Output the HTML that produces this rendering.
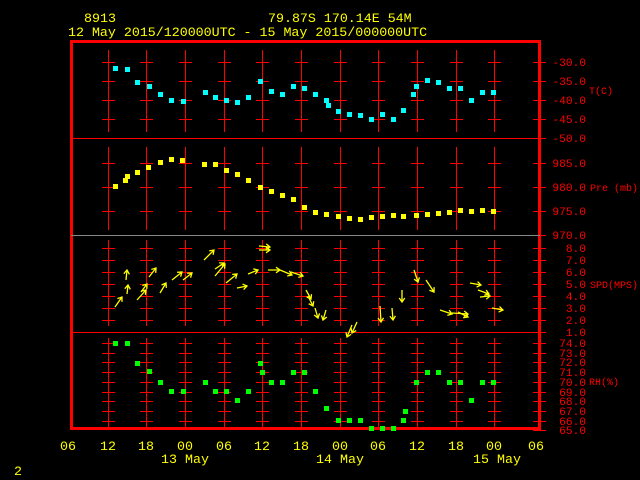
<!DOCTYPE html>
<html><head><meta charset="utf-8"><style>
html,body{margin:0;padding:0;background:#000;width:640px;height:480px;overflow:hidden}
svg{display:block}
text{font-family:"Liberation Mono",monospace;font-size:13.3px}
.s{font-size:11.2px}
.t{font-size:10px}
</style></head><body>
<svg id="s" width="640" height="480" viewBox="0 0 640 480" xmlns="http://www.w3.org/2000/svg">
<g fill="#ffff00">
<text x="84" y="22">8913</text>
<text x="268" y="22">79.87S  170.14E   54M</text>
<text x="68" y="36">12 May 2015/120000UTC - 15 May 2015/000000UTC</text>
<g text-anchor="middle">
<text x="68" y="450">06</text><text x="108" y="450">12</text><text x="146" y="450">18</text><text x="185" y="450">00</text>
<text x="224" y="450">06</text><text x="262" y="450">12</text><text x="301" y="450">18</text><text x="340" y="450">00</text>
<text x="378" y="450">06</text><text x="417" y="450">12</text><text x="456" y="450">18</text><text x="494" y="450">00</text><text x="536" y="450">06</text>
<text x="185" y="463">13 May</text><text x="340" y="463">14 May</text><text x="497" y="463">15 May</text>
</g>
<text x="14" y="475">2</text>
</g>
<g id="grid"></g>
<rect x="71.5" y="41.5" width="468" height="387" fill="none" stroke="#ff0000" stroke-width="3"/>
<line x1="71" y1="138.5" x2="540" y2="138.5" stroke="#ff0000" stroke-width="1"/>
<line x1="71" y1="235.5" x2="540" y2="235.5" stroke="#888" stroke-width="1"/>
<line x1="71" y1="332.5" x2="540" y2="332.5" stroke="#ff0000" stroke-width="1"/>
<g fill="#ff0000" text-anchor="end" id="lab"></g>
<g fill="#ff0000">
<text x="589" y="94" class="t">T(C)</text>
<text x="590" y="191" class="t">Pre (mb)</text>
<text x="590" y="288" class="t">SPD(MPS)</text>
<text x="589" y="385" class="t">RH(%)</text>
</g>
<g id="pts"></g>
<g id="arr" stroke="#ffff00" stroke-width="1.3" fill="none"></g>
</svg>
<script>
var NS="http://www.w3.org/2000/svg";
function el(p,t,a){var e=document.createElementNS(NS,t);for(var k in a)e.setAttribute(k,a[k]);p.appendChild(e);return e;}
var g=document.getElementById('grid'),lab=document.getElementById('lab');
var xs=[108,146,185,224,262,301,340,378,417,456,494];
var rows=[];
[62,81,100,119].forEach(function(y){rows.push(y)});
[163,187,211].forEach(function(y){rows.push(y)});
for(var i=0;i<8;i++)rows.push(248+i*12);
for(var i=0;i<9;i++)rows.push(Math.round(343+i*9.7));
xs.forEach(function(x){
 [[50,132],[147,230],[240,326],[338,428]].forEach(function(r){el(g,'line',{x1:x+0.5,y1:r[0],x2:x+0.5,y2:r[1],stroke:'#ff0000','stroke-width':1});});
 rows.forEach(function(y){el(g,'line',{x1:x-6,y1:y+0.5,x2:x+7,y2:y+0.5,stroke:'#ff0000','stroke-width':1});});
});
var L=[[62,"-30.0"],[81,"-35.0"],[100,"-40.0"],[119,"-45.0"],[138,"-50.0"],[163,"985.0"],[187,"980.0"],[211,"975.0"],[235,"970.0"]];
for(var i=0;i<8;i++)L.push([248+i*12,(8-i)+".0"]);
for(var i=0;i<10;i++)L.push([Math.round(343+i*9.7),(74-i)+".0"]);
L.forEach(function(a){el(g,'line',{x1:533,y1:a[0]+0.5,x2:546,y2:a[0]+0.5,stroke:'#ff0000','stroke-width':1});
 var t=el(lab,'text',{x:586,y:a[0]+4,'class':'s'});t.textContent=a[1];});
var P=document.getElementById('pts');
function sq(list,c){list.forEach(function(p){el(P,'rect',{x:p[0]-2,y:p[1]-2,width:5,height:5,fill:c});});}
sq([[115,68],[127,69],[137,82],[149,86],[160,94],[171,100],[183,101],[205,92],[215,97],[226,100],[237,102],[248,97],[260,81],[271,91],[282,94],[293,86],[304,88],[315,94],[326,100],[328,105],[338,111],[349,114],[360,115],[371,119],[382,114],[393,119],[403,110],[413,94],[416,86],[427,80],[438,82],[449,88],[460,88],[471,100],[482,92],[493,92]],'#00ffff');
sq([[115,186],[125,180],[127,176],[137,172],[148,167],[160,162],[171,159],[182,160],[204,164],[215,164],[226,170],[237,174],[248,180],[260,187],[271,191],[282,195],[293,199],[304,207],[315,212],[326,214],[338,216],[349,218],[360,219],[371,217],[382,216],[393,215],[403,216],[416,215],[427,214],[438,213],[449,212],[460,210],[471,211],[482,210],[493,211]],'#ffff00');
sq([[115,343],[127,343],[137,363],[149,371],[160,382],[171,391],[183,391],[205,382],[215,391],[226,391],[237,400],[248,391],[260,363],[262,372],[271,382],[282,382],[293,372],[304,372],[315,391],[326,408],[338,420],[349,420],[360,420],[371,428],[382,428],[393,428],[403,420],[405,411],[416,382],[427,372],[438,372],[449,382],[460,382],[471,400],[482,382],[493,382]],'#00ff00');
var A=document.getElementById('arr');
var W=[[115,307,122,297],[126,280,127,270],[127,294,128,285],[137,300,146,290],[141,292,147,284],[149,277,156,268],[160,293,166,283],[172,280,182,272],[183,280,192,273],[204,260,214,250],[215,276,225,264],[215,269,224,263],[226,283,237,274],[237,288,247,286],[248,274,258,270],[259,250,270,250],[259,246,270,247],[268,270,280,270],[280,270,292,275],[291,272,303,276],[306,290,311,299],[308,296,313,306],[315,308,318,318],[326,310,323,320],[352,325,347,337],[357,322,352,333],[380,306,381,322],[392,308,393,320],[402,290,402,302],[414,270,418,282],[426,280,434,292],[440,310,452,314],[452,313,468,314],[470,283,481,285],[478,290,489,294],[480,297,490,296],[492,308,503,310],[458,312,468,317]];
W.forEach(function(w){
 var dx=w[2]-w[0],dy=w[3]-w[1],l=Math.sqrt(dx*dx+dy*dy),ux=dx/l,uy=dy/l,h=4;
 var ax=w[2]-h*ux-h*0.7*uy,ay=w[3]-h*uy+h*0.7*ux,bx=w[2]-h*ux+h*0.7*uy,by=w[3]-h*uy-h*0.7*ux;
 el(A,'path',{d:'M'+w[0]+' '+w[1]+'L'+w[2]+' '+w[3]+'M'+ax+' '+ay+'L'+w[2]+' '+w[3]+'L'+bx+' '+by});
});
</script>
</body></html>
